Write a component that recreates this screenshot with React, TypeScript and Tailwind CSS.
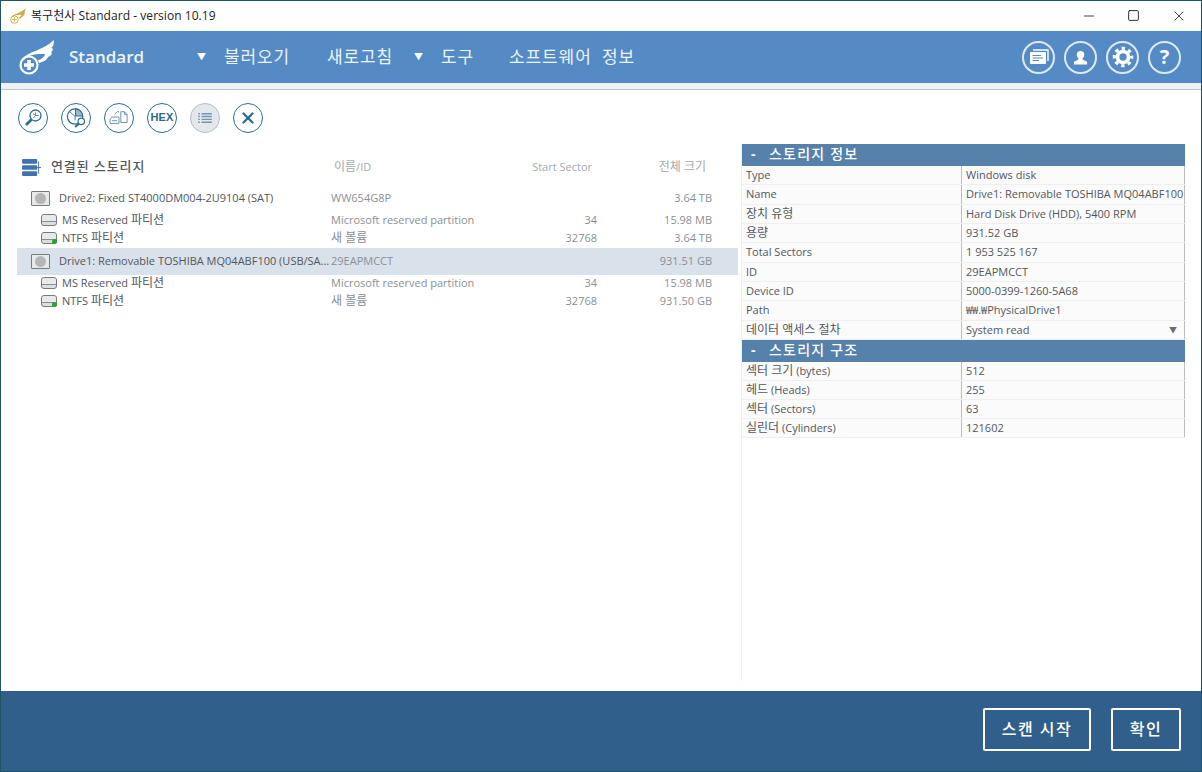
import { Minus, Square, X } from "lucide-react";

const FONT = "font-['Open_Sans','Noto_Sans_CJK_KR',sans-serif]";

const DRIVES = [
  {
    name: "Drive2: Fixed ST4000DM004-2U9104 (SAT)",
    id: "WW654G8P",
    size: "3.64 TB",
    ntfs: "3.64 TB",
    selected: false,
  },
  {
    name: "Drive1: Removable TOSHIBA MQ04ABF100 (USB/SA...",
    id: "29EAPMCCT",
    size: "931.51 GB",
    ntfs: "931.50 GB",
    selected: true,
  },
];

const INFO = [
  ["Type", "Windows disk"],
  ["Name", "Drive1: Removable TOSHIBA MQ04ABF100"],
  ["장치 유형", "Hard Disk Drive (HDD), 5400 RPM"],
  ["용량", "931.52 GB"],
  ["Total Sectors", "1 953 525 167"],
  ["ID", "29EAPMCCT"],
  ["Device ID", "5000-0399-1260-5A68"],
  ["Path", "₩₩.₩PhysicalDrive1"],
];

const GEOMETRY = [
  ["섹터 크기 (bytes)", "512"],
  ["헤드 (Heads)", "255"],
  ["섹터 (Sectors)", "63"],
  ["실린더 (Cylinders)", "121602"],
];

// Hangul runs a point bigger than the latin around them
function Mixed({ text }: { text: string }) {
  const parts = text.split(/([가-힣]+(?: [가-힣]+)*)/);
  return (
    <>
      {parts.map((p, i) =>
        i % 2 === 1 ? (
          <span key={i} className="text-[12px]">
            {p}
          </span>
        ) : (
          <span key={i}>{p}</span>
        ),
      )}
    </>
  );
}

function Wing({ className, color, plusWidth }: { className?: string; color: string; plusWidth: number }) {
  return (
    <svg viewBox="0 0 40 36" className={className} fill="none">
      <path
        d="M5 20 C12 12 25 12 37 1 C37 5 36 8 34 9 C37 9 36 12 34 13 C36 14 34 17 31 18 C30 21 26 23 22 24 L21 21.5 C25 20 28 17 28 15 C20 15 12 15 7 21Z"
        fill={color}
      />
      <circle cx="12" cy="26" r="8.5" stroke={color} strokeWidth="2.2" />
      <path d="M12 21 V31 M7 26 H17" stroke={color} strokeWidth={plusWidth} />
    </svg>
  );
}

function ToolButton({ active, children }: { active?: boolean; children: React.ReactNode }) {
  return (
    <div className={`w-[30px] h-[30px] rounded-full border-[1.5px] flex items-center justify-center text-[#2f6d8f] ${active ? "bg-[#e4e8ec] border-[#b4bdc4]" : "bg-white border-[#2f6d8f]"}`}>
      {children}
    </div>
  );
}

function HeaderButton({ children }: { children: React.ReactNode }) {
  return (
    <div className="w-[33px] h-[33px] rounded-full border-2 border-[#dfe9f4] flex items-center justify-center text-white">
      {children}
    </div>
  );
}

function DriveIcon() {
  return (
    <div className="w-[19px] h-[15px] border border-[#77797b] bg-[#e9e9e9] rounded-[1px] flex items-center justify-center shrink-0">
      <div className="w-[11px] h-[11px] rounded-full bg-[#b4b6b8]" />
    </div>
  );
}

function PartitionIcon({ green }: { green?: boolean }) {
  return (
    <div className="relative w-[16px] h-[12px] border border-[#77797b] bg-[#dcdedf] rounded-[3px] shrink-0">
      <div className="h-[7px] border-b border-[#8a8c8e] bg-[#e8e9ea] rounded-t-[3px]" />
      {green && <div className="absolute -right-[1px] -bottom-[1px] w-[5px] h-[5px] bg-[#2aa52a] rounded-full" />}
    </div>
  );
}

function PartitionRow({ green, label, name, start, size, className }: { green?: boolean; label: string; name: string; start: string; size: string; className: string }) {
  return (
    <div className={`flex items-center text-[11px] ${className}`}>
      <div className="w-[314px] pl-[24px] flex items-center gap-[5px] text-[#53575b]">
        <PartitionIcon green={green} />
        <span>
          <Mixed text={label} />
        </span>
      </div>
      <div className="w-[190px] text-[#8b8f93]">
        <Mixed text={name} />
      </div>
      <div className="w-[76px] text-right text-[#8b8f93]">{start}</div>
      <div className="w-[115px] text-right text-[#8b8f93]">{size}</div>
    </div>
  );
}

function SectionHeader({ title }: { title: string }) {
  return (
    <div className="h-[22px] bg-[#5581aa] text-white text-[14px] font-medium flex items-center pl-[9px] pb-[3px] tracking-[1.2px]">
      <span className="w-[18px] font-bold">-</span>
      <span>{title}</span>
    </div>
  );
}

function InfoRow({ label, value, arrow, tall }: { label: string; value: string; arrow?: boolean; tall?: boolean }) {
  return (
    <div className={`flex text-[11px] text-[#53575b] bg-[#fbfbfb] border-b border-[#efefef] leading-[18px] ${tall ? "h-[19.33px]" : "h-[19px]"}`}>
      <div className="w-[220px] shrink-0 pl-[4px] border-r border-[#b9bec3]">
        <Mixed text={label} />
      </div>
      <div className="flex-1 min-w-0 pl-[4px] flex justify-between pr-[7px] whitespace-nowrap border-r border-[#b9bec3]">
        <span>{value}</span>
        {arrow && <span className="text-[8px] text-[#6b6f73]">▼</span>}
      </div>
    </div>
  );
}

export default function App() {
  return (
    <div className={`${FONT} w-[1202px] h-[772px] flex flex-col border border-[#1f5468] bg-white overflow-hidden`}>
      {/* Title bar */}
      <div className="h-[30px] flex items-center shrink-0 bg-white pb-[1px]">
        <Wing className="w-[18px] h-[16px] ml-[8px] mr-[4px]" color="#d2a93c" plusWidth={2} />
        <span className="text-[12px] text-[#222] tracking-[0.05px]">복구천사 Standard - version 10.19</span>
        <div className="ml-auto flex items-center">
          <div className="w-[45px] flex justify-center"><Minus className="w-[16px] h-[16px] text-black" strokeWidth={1.1} /></div>
          <div className="w-[45px] flex justify-center mr-[1px]"><Square className="w-[13px] h-[13px] text-black" strokeWidth={1.5} /></div>
          <div className="w-[44px] flex justify-center"><X className="w-[16px] h-[16px] text-black" strokeWidth={1.1} /></div>
        </div>
      </div>

      {/* Menu */}
      <div className="h-[52px] shrink-0 bg-[#548bc5] flex items-center text-white">
        <Wing className="w-[40px] h-[36px] ml-[16px]" color="#ffffff" plusWidth={3.6} />
        <span className="ml-[12px] text-[17px] font-semibold text-[#eef3f9] w-[128px]">Standard</span>
        <span className="text-[9px] w-[27px]">▼</span>
        <span className="text-[17px] w-[103px] text-[#eef3f9] tracking-[0.9px]">불러오기</span>
        <span className="text-[17px] w-[87px] text-[#eef3f9] tracking-[0.9px]">새로고침</span>
        <span className="text-[9px] w-[27px]">▼</span>
        <span className="text-[17px] w-[68px] text-[#eef3f9] tracking-[0.9px]">도구</span>
        <span className="text-[17px] text-[#eef3f9] tracking-[0.9px] [word-spacing:5px]">소프트웨어 정보</span>
        <div className="ml-auto mr-[20px] flex gap-[9px]">
          <HeaderButton>
            <svg viewBox="0 0 20 16" className="w-[20px] h-[16px]">
              <path d="M4 1 H19 V12" fill="none" stroke="white" strokeWidth="1.4" />
              <rect x="1" y="3" width="16" height="12" rx="1" fill="white" />
              <path d="M3.5 6.5 H12 M3.5 9 H14 M3.5 11.5 H10" stroke="#548bc5" strokeWidth="1.1" />
            </svg>
          </HeaderButton>
          <HeaderButton>
            <svg viewBox="0 0 16 16" className="w-[15px] h-[15px]" fill="white">
              <circle cx="8" cy="5" r="4" />
              <path d="M6 8 H10 L10.5 10.5 L15 12.5 V15.5 H1 V12.5 L5.5 10.5 Z" />
            </svg>
          </HeaderButton>
          <HeaderButton>
            <svg viewBox="0 0 24 24" className="w-[22px] h-[22px]" fill="none" stroke="white">
              <circle cx="12" cy="12" r="6" strokeWidth="4" />
              <circle cx="12" cy="12" r="9.5" strokeWidth="3.4" strokeDasharray="3.7 3.76" strokeDashoffset="1.85" />
            </svg>
          </HeaderButton>
          <HeaderButton><span className="text-[20px] font-bold leading-none">?</span></HeaderButton>
        </div>
      </div>

      {/* Strip under menu */}
      <div className="h-[7px] shrink-0 bg-[#eff2f4] border-b border-[#bfc3cb]" />

      {/* Toolbar */}
      <div className="h-[53px] shrink-0 pl-[17px] pt-[2px] flex items-center gap-[13px]">
        <ToolButton>
          <svg viewBox="0 0 20 20" className="w-[20px] h-[20px]" fill="none" stroke="currentColor">
            <circle cx="12.5" cy="7.5" r="5.5" strokeWidth="1.3" />
            <path d="M12.5 4.5 V7.5 H15.5 M10 5.5 L12.5 7.5 M12.5 7.5 L10.5 10" strokeWidth="0.8" />
            <path d="M8.5 11.5 L3 17" strokeWidth="2.6" />
          </svg>
        </ToolButton>
        <ToolButton>
          <svg viewBox="0 0 24 24" className="w-[23px] h-[23px]" fill="none" stroke="currentColor">
            <circle cx="10.5" cy="11" r="8" strokeWidth="1.3" />
            <path d="M11 3 A8 8 0 0 1 18.5 10.5 H11 Z" fill="#9db9cc" strokeWidth="1.1" />
            <path d="M10.5 11 V15 M10.5 11 L5 6" strokeWidth="0.9" />
            <circle cx="17" cy="16" r="3.4" fill="white" strokeWidth="1.3" />
            <path d="M14.5 18.5 L10.5 22" strokeWidth="2" />
          </svg>
        </ToolButton>
        <ToolButton>
          <svg viewBox="0 0 24 20" className="w-[22px] h-[18px]" fill="none" stroke="#5f8ba6" strokeWidth="1">
            <path d="M14 3 H18 L21 6 V15 H14 Z M18 3 V6 H21" />
            <path d="M2 16 V11 L4 9 H12 V16 H2 Z M4 13 H10" />
            <path d="M7 6 L10 3 H12" />
          </svg>
        </ToolButton>
        <ToolButton><span className="text-[11px] font-bold font-['Liberation_Sans',sans-serif] tracking-[0.2px] text-[#2a6a8d]">HEX</span></ToolButton>
        <ToolButton active>
          <svg viewBox="0 0 16 14" className="w-[14px] h-[12px]" stroke="#6f97b4" strokeWidth="1.6">
            <path d="M0 2 H2 M4 2 H16 M0 5.3 H2 M4 5.3 H16 M0 8.6 H2 M4 8.6 H16 M0 12 H2 M4 12 H16" />
          </svg>
        </ToolButton>
        <ToolButton><X className="w-[18px] h-[18px]" strokeWidth={3.2} /></ToolButton>
      </div>

      {/* Body */}
      <div className="flex-1 flex min-h-0 pr-[16px]">
        <div className="w-[740px] shrink-0 pl-[16px] pr-[3px] pt-[11px]">
          <div className="h-[26px] flex items-center text-[11px] text-[#a5a8ab]">
            <div className="w-[314px] flex items-center pl-[5px] gap-[10px] text-[#53575b]">
              <svg viewBox="0 0 20 18" className="w-[19px] h-[17px]">
                <rect x="0" y="0" width="16" height="5" rx="1" fill="#3f73b0" />
                <rect x="0" y="6.5" width="16" height="5" rx="1" fill="#3f73b0" />
                <rect x="0" y="13" width="16" height="5" rx="1" fill="#3f73b0" />
                <path d="M16 9 H20" stroke="#3f73b0" strokeWidth="1" />
                <path d="M17.5 2.5 V15.5" stroke="#3f73b0" strokeWidth="1" />
              </svg>
              <span className="text-[13px] font-medium tracking-[0.9px]">연결된 스토리지</span>
            </div>
            <div className="w-[150px] pl-[3px]"><Mixed text="이름/ID" /></div>
            <div className="w-[111px] text-right">Start Sector</div>
            <div className="w-[114px] text-right"><Mixed text="전체 크기" /></div>
          </div>

          {DRIVES.map((d, i) => (
            <div key={d.id}>
              <div className={`flex items-center text-[11px] ${i === 0 ? "h-[26px] mt-[5px]" : "h-[27px] mt-[1px]"} ${d.selected ? "bg-[#d9e1ea]" : ""}`}>
                <div className="w-[314px] pl-[14px] flex items-center gap-[9px] text-[#53575b] whitespace-nowrap">
                  <DriveIcon />
                  <span>{d.name}</span>
                </div>
                <div className="w-[266px] text-[#8b8f93]">{d.id}</div>
                <div className="w-[115px] text-right text-[#8b8f93]">{d.size}</div>
              </div>
              <PartitionRow label="MS Reserved 파티션" name="Microsoft reserved partition" start="34" size="15.98 MB" className={i === 0 ? "h-[18px]" : "h-[18px] -mt-[1px]"} />
              <PartitionRow green label="NTFS 파티션" name="새 볼륨" start="32768" size={d.ntfs} className="h-[18px]" />
            </div>
          ))}
        </div>

        <div className="flex-1 min-w-0 border-l border-[#eeeeee] mb-[10px]">
          <div className="mt-[1px]">
            <SectionHeader title="스토리지 정보" />
            {INFO.map(([label, value]) => (
              <InfoRow key={label} label={label} value={value} tall />
            ))}
            <InfoRow label="데이터 액세스 절차" value="System read" arrow tall />
            <SectionHeader title="스토리지 구조" />
            {GEOMETRY.map(([label, value]) => (
              <InfoRow key={label} label={label} value={value} />
            ))}
          </div>
        </div>
      </div>

      {/* Footer */}
      <div className="h-[80px] shrink-0 bg-[#2f5f8a] flex items-center justify-end pr-[20px] gap-[20px] pb-[4px]">
        <div className="w-[108px] h-[43px] border-2 border-white rounded-[2px] flex items-center justify-center text-white text-[16px] font-medium tracking-[1.5px]">스캔 시작</div>
        <div className="w-[70px] h-[43px] border-2 border-white rounded-[2px] flex items-center justify-center text-white text-[16px] font-medium tracking-[1.5px]">확인</div>
      </div>
    </div>
  );
}
